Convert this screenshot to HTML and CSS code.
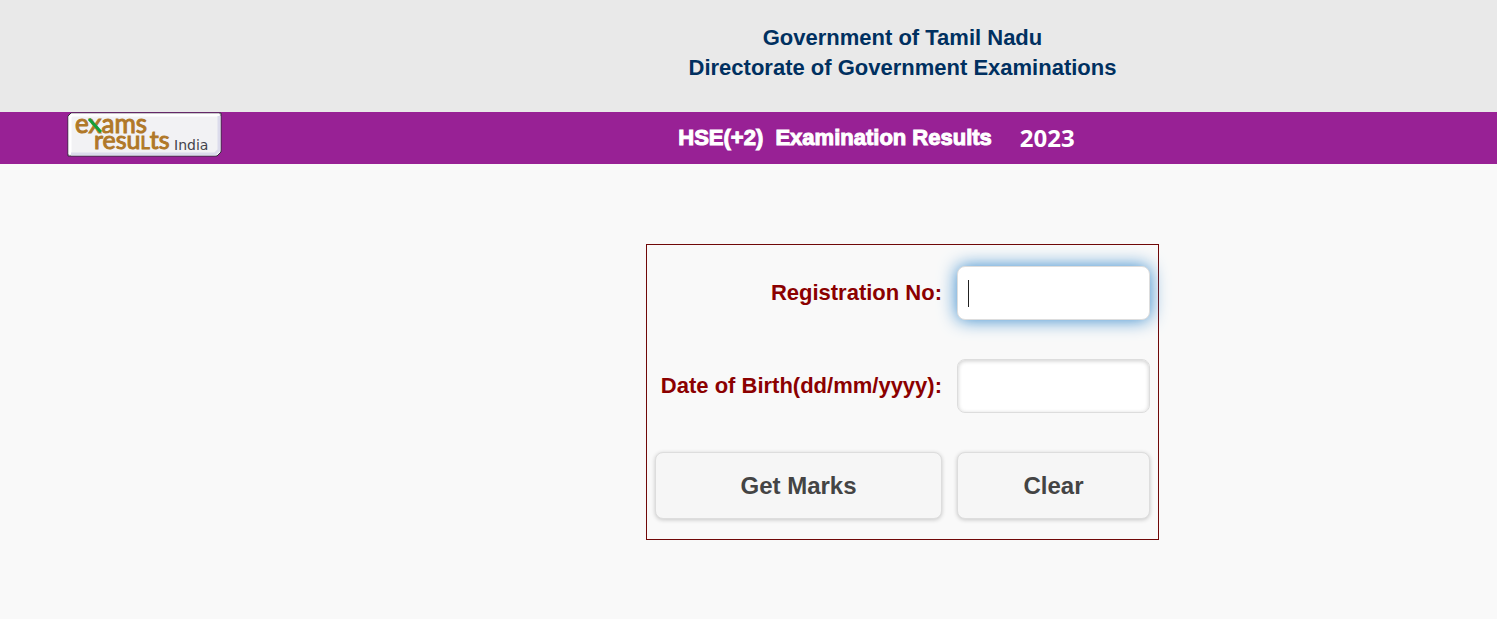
FILE: index.html
```html
<!DOCTYPE html>
<html lang="en">
<head>
    <meta charset="UTF-8">
    <meta name="viewport" content="width=device-width, initial-scale=1.0">
    <title>HSE(+2) Examination Results 2023</title>
    <link rel="stylesheet" href="styles.css">
</head>
<body>
    <header class="header">
        <h1 class="header-title">Government of Tamil Nadu<br>Directorate of Government Examinations</h1>
    </header>

    <div class="banner">
        <a class="logo" href="#" aria-label="exams results India">
            <svg width="155" height="45" viewBox="0 0 155 45">
                <path d="M4 1H154V40L150 44H1V4Z" fill="#f2f2f4" stroke="#33303a" stroke-width="1"/>
                <path d="M3 42V5L5 3H152" fill="none" stroke="#ffffff" stroke-width="3"/>
                <path d="M152 4V38L148 42H4" fill="none" stroke="#dcdcec" stroke-width="3"/>
                <text class="logo-main" x="8" y="21">exams</text>
                <text class="logo-main logo-second" x="27" y="37">resu<tspan class="logo-small">L</tspan>ts</text>
                <text class="logo-country" x="107" y="38">India</text>
                <path d="M22 7L34 20" stroke="#12a03c" stroke-width="3"/>
            </svg>
        </a>
        <h2 class="banner-title">
            <span>HSE(+2)&nbsp; Examination Results</span>
            <span class="banner-year">2023</span>
        </h2>
    </div>

    <main class="content">
        <form class="result-form">
            <label for="regno">Registration No:</label>
            <input class="active" type="text" id="regno" name="regno" autofocus>
            <label for="dob">Date of Birth(dd/mm/yyyy):</label>
            <input type="text" id="dob" name="dob">
            <button type="submit">Get Marks</button>
            <button type="reset">Clear</button>
        </form>
    </main>
</body>
</html>
```
FILE: styles.css
```css
* {
    margin: 0;
    padding: 0;
    box-sizing: border-box;
}

body {
    font-family: "Liberation Sans", Arial, sans-serif;
    font-size: 22px;
    font-weight: bold;
    background-color: #f9f9f9;
}

.header {
    padding: 23px 0 29px 308px;
    background-color: #e9e9e9;
    text-align: center;
}

.header-title {
    font-size: 22px;
    line-height: 30px;
    color: #003060;
}

.banner {
    display: flex;
    align-items: flex-start;
    height: 52px;
    background-color: #982195;
}

.logo {
    flex: 0 0 308px;
    padding-left: 67px;
}

.logo svg {
    display: block;
    overflow: visible;
}

.logo-main {
    font-family: Lato, sans-serif;
    font-size: 26px;
    font-weight: normal;
    fill: #b07828;
    stroke: #b07828;
    stroke-width: 1px;
}

.logo-second {
    font-size: 25px;
}

.logo-small {
    font-size: 18px;
}

.logo-country {
    font-family: "DejaVu Sans", sans-serif;
    font-size: 14px;
    font-weight: normal;
    fill: #44444c;
}

.banner-title {
    flex: 1;
    display: flex;
    justify-content: center;
    gap: 28px;
    padding-right: 52px;
    font-size: 22px;
    line-height: 52px;
    color: #fff;
    -webkit-text-stroke: 1px #fff;
}

.banner-year {
    font-family: "Open Sans", sans-serif;
    font-size: 24px;
    -webkit-text-stroke: 0;
}

.content {
    display: flex;
    justify-content: center;
    padding: 80px 0 80px 308px;
}

.result-form {
    display: grid;
    grid-template-columns: minmax(287px, auto) 193px;
    align-items: center;
    column-gap: 15px;
    row-gap: 39px;
    padding: 21px 8px 20px;
    border: 1px solid #700808;
}

.result-form label {
    color: #8b0000;
    text-align: right;
}

.result-form input {
    width: 100%;
    height: 54px;
    padding: 0 10px;
    border: 1px solid #ddd;
    border-radius: 8px;
    outline: none;
    background-color: #fff;
    box-shadow: inset 0 1px 4px rgba(0, 0, 0, 0.2);
    font: inherit;
    font-weight: normal;
    color: #333;
}

/* steady text cursor in the field being edited */
.result-form .active {
    background: linear-gradient(#222, #222) 10px center / 1px 27px no-repeat #fff;
    box-shadow: 0 0 18px #3388cc;
    caret-color: transparent;
}

.result-form button {
    height: 67px;
    border: 1px solid #ddd;
    border-radius: 8px;
    background-color: #f6f6f6;
    box-shadow: 0 1px 4px rgba(0, 0, 0, 0.2);
    font: inherit;
    font-size: 24px;
    color: #444;
    cursor: pointer;
}
```
